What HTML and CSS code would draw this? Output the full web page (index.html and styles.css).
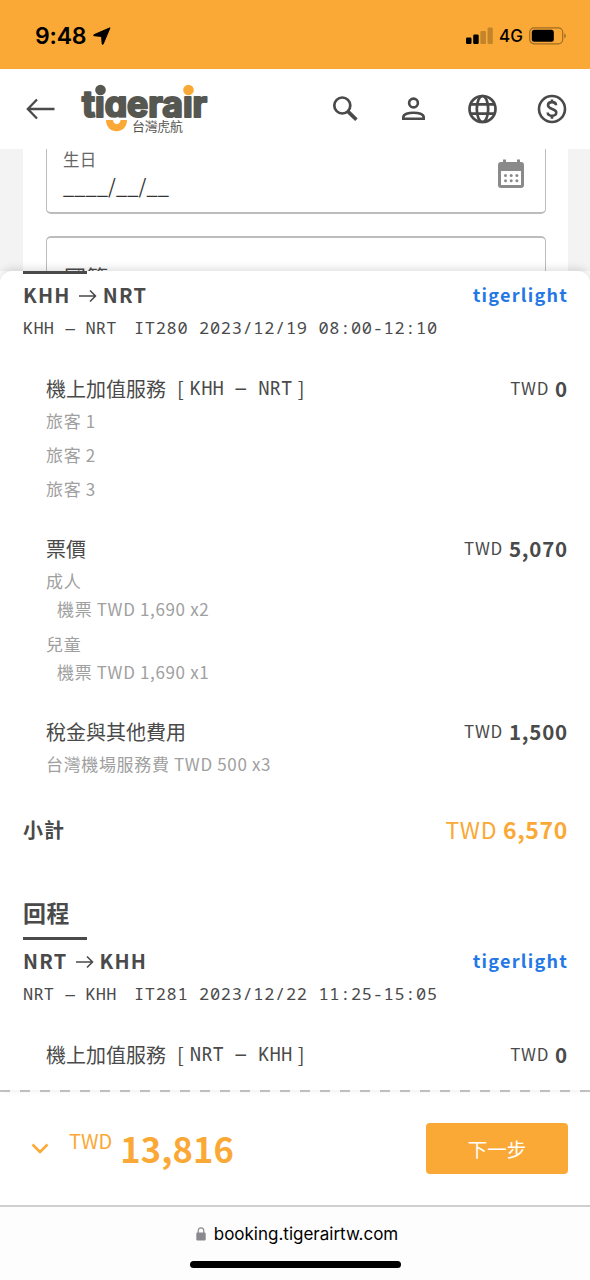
FILE: index.html
```html
<!DOCTYPE html>
<html lang="zh-Hant">
<head>
<meta charset="utf-8">
<title>tigerair 台灣虎航</title>
<link rel="stylesheet" href="styles.css">
</head>
<body>
<div class="phone">
  <div class="status">
    <span class="time">9:48</span>
    <svg class="loc" width="18" height="18" viewBox="0 0 18 18"><path d="M17 .8 10.200 17q-.6 1-1 0L8.600 9.400 1 8.700q-1-.4 0-1z" fill="#000" stroke="#000" stroke-linejoin="round"/></svg>
    <svg class="signal" width="28" height="18" viewBox="0 0 28 18"><rect x="0" y="10.500" width="5.500" height="6.500" rx="1.200"/><rect x="7.200" y="7.500" width="5.500" height="9.500" rx="1.200"/><g opacity=".22"><rect x="14.400" y="4" width="5.500" height="13" rx="1.200"/><rect x="21.600" y="0.500" width="5.200" height="16.500" rx="1.200"/></g></svg>
    <span class="net">4G</span>
    <svg class="battery" width="39" height="18" viewBox="0 0 39 18"><rect x=".7" y=".8" width="33" height="16" rx="4.500" fill="none" stroke="#a06c22" stroke-width="1.200"/><rect x="2.800" y="2.800" width="22" height="12" rx="2.500"/><path d="M35.500 6.200q2.300 2.600 0 5.200z" fill="#7c5319"/></svg>
  </div>

  <header class="header">
    <svg class="back" width="29" height="22" viewBox="0 0 29 22"><path d="M11 1.500 1.800 11l9.200 9.500M2 11h26.500" fill="none" stroke="#4a4a4a" stroke-width="2.300"/></svg>
    <svg class="logo" width="130" height="52" viewBox="0 0 130 52">
      <text class="logo-word" x="1" y="33.500" textLength="125" lengthAdjust="spacingAndGlyphs">tıgeraır</text>
      <rect x="23" y="34.700" width="25" height="17" fill="#fff"/>
      <circle cx="19.500" cy="7" r="5.300" fill="#575752"/>
      <circle cx="107.500" cy="7" r="5.300" fill="#faa936"/>
      <path d="M25 37h7c0 5.500 7.500 5.500 7.500 0H46c0 15-21 15-21 0z" fill="#faa936"/>
      <text class="logo-sub" x="51" y="47.500" textLength="51">台灣虎航</text>
    </svg>
    <nav class="tools">
      <svg width="28" height="28" viewBox="0 0 28 28"><circle cx="11.300" cy="10.500" r="8" fill="none" stroke="#4a4a4a" stroke-width="2.700"/><path d="m16.600 16.100 8.800 8.600" stroke="#4a4a4a" stroke-width="3.700"/></svg>
      <svg width="28" height="28" viewBox="0 0 28 28"><circle cx="14.500" cy="8" r="4.400" fill="none" stroke="#4a4a4a" stroke-width="2.600"/><path d="M4.300 23.800v-1.600c0-6 20.400-6 20.400 0v1.600z" fill="none" stroke="#4a4a4a" stroke-width="2.600"/></svg>
      <svg width="30" height="30" viewBox="0 0 30 30"><g fill="none" stroke="#4a4a4a" stroke-width="2.700"><circle cx="15.500" cy="15" r="13"/><ellipse cx="15.500" cy="15" rx="5.700" ry="13"/><path d="M3.800 10.400h23.400M3.800 19.600h23.400"/></g></svg>
      <svg width="30" height="30" viewBox="0 0 30 30"><g fill="none" stroke="#4a4a4a" stroke-width="2.600"><circle cx="15" cy="15" r="13"/><path d="M19 11.300c0-4.200-8-4.200-8 0 0 4.400 8.300 2.900 8.300 7.200 0 4.500-8.600 4.500-8.600 0M15 5.500v3M15 21.800v3"/></g></svg>
    </nav>
  </header>

  <main class="form">
    <div class="card">
      <div class="field birthday">
        <div>
          <div class="label">生日</div>
          <div class="mask">____/__/__</div>
        </div>
        <svg width="27" height="30" viewBox="0 0 27 30"><path fill="#8a8a8a" fill-rule="evenodd" d="M5 .5h3V3h11V.5h3V3h1q3 0 3 3v20q0 3-3 3H3q-3 0-3-3V6q0-3 3-3h2zM3 12v14h20V12z"/><g fill="#8a8a8a"><circle cx="7.500" cy="16.500" r="1.500"/><circle cx="13.200" cy="16.500" r="1.500"/><circle cx="18.900" cy="16.500" r="1.500"/><circle cx="7.500" cy="21.800" r="1.500"/><circle cx="13.200" cy="21.800" r="1.500"/><circle cx="18.900" cy="21.800" r="1.500"/></g></svg>
      </div>
      <div class="field nation"><span>國籍</span></div>
    </div>
  </main>

  <section class="sheet">
    <div class="rule"></div>
    <div class="route"><span class="r1">KHH</span><svg class="arrow" width="18" height="14" viewBox="0 0 18 14"><path d="M0 7h16.500M11 1.500 16.500 7 11 12.500" fill="none" stroke="#4a4a4a" stroke-width="1.600"/></svg><span class="r1">NRT</span><span class="fare">tigerlight</span></div>
    <div class="flight"><span class="leg">KHH <span class="dash">–</span> NRT</span><span>IT280 2023/12/19 08:00-12:10</span></div>
    <div class="item first">
      <div class="title"><span>機上加值服務</span><span class="br">[</span><span class="pair">KHH <span class="dash">–</span> NRT</span><span class="br2">]</span><span class="price"><small>TWD</small><b>0</b></span></div>
      <div class="sub">旅客 1</div>
      <div class="sub">旅客 2</div>
      <div class="sub">旅客 3</div>
    </div>
    <div class="item">
      <div class="title"><span>票價</span><span class="price"><small>TWD</small><b>5,070</b></span></div>
      <div class="sub">成人</div>
      <div class="ticket">機票 TWD 1,690 x2</div>
      <div class="sub">兒童</div>
      <div class="ticket">機票 TWD 1,690 x1</div>
    </div>
    <div class="item tax">
      <div class="title"><span>稅金與其他費用</span><span class="price"><small>TWD</small><b>1,500</b></span></div>
      <div class="sub">台灣機場服務費 TWD 500 x3</div>
    </div>
    <div class="subtotal"><b>小計</b><span class="sum">TWD <b>6,570</b></span></div>
    <h2 class="heading">回程</h2>
    <div class="rule"></div>
    <div class="route"><span class="r1">NRT</span><svg class="arrow" width="18" height="14" viewBox="0 0 18 14"><path d="M0 7h16.500M11 1.500 16.500 7 11 12.500" fill="none" stroke="#4a4a4a" stroke-width="1.600"/></svg><span class="r1">KHH</span><span class="fare">tigerlight</span></div>
    <div class="flight"><span class="leg">NRT <span class="dash">–</span> KHH</span><span>IT281 2023/12/22 11:25-15:05</span></div>
    <div class="item first">
      <div class="title"><span>機上加值服務</span><span class="br">[</span><span class="pair">NRT <span class="dash">–</span> KHH</span><span class="br2">]</span><span class="price"><small>TWD</small><b>0</b></span></div>
    </div>
  </section>

  <div class="total">
    <svg class="chev" width="18" height="12" viewBox="0 0 18 12"><path d="m1.500 2.500 7.500 7.500L16.500 2.500" fill="none" stroke="#faa936" stroke-width="2.600"/></svg>
    <span class="cur">TWD</span><b class="amount">13,816</b>
    <button class="next">下一步</button>
  </div>

  <footer class="browser">
    <div class="url"><svg width="10" height="14" viewBox="0 0 10 14"><rect x=".3" y="5.500" width="9.400" height="8" rx="1.200" fill="#8a8a8e"/><path d="M2.200 6V3.800q0-3 2.800-3t2.800 3V6" fill="none" stroke="#8a8a8e" stroke-width="1.200"/></svg><span>booking.tigerairtw.com</span></div>
    <div class="home"></div>
  </footer>
</div>
</body>
</html>
```
FILE: styles.css
```css
* { box-sizing: border-box; }
body { margin: 0; background: #fff; color: #4a4a4a; font-family: "Noto Sans CJK TC", sans-serif; }
svg { display: block; flex: none; }
.phone { width: 590px; height: 1280px; overflow: hidden; display: flex; flex-direction: column; }
.phone > * { flex: none; }

.status { height: 69px; padding: 2px 22px 0 35px; background: #faa936; color: #000; display: flex; align-items: center; font-family: Inter, sans-serif; }
.time { width: 51px; font-size: 23px; font-weight: 600; letter-spacing: -.2px; }
.loc { margin-left: 7px; }
.signal { margin-left: auto; }
.net { width: 24px; margin: 1px 6px 0 5px; font-size: 17px; font-weight: 500; white-space: nowrap; }

.header { height: 80px; padding: 0 23px 0 26px; display: flex; align-items: center; background: #fff; }
.logo { margin: 0 0 0 26px; overflow: visible; }
.logo-word { font-family: Inter, sans-serif; font-weight: 700; font-size: 35.500px; fill: #575752; stroke: #575752; stroke-width: 2.200px; stroke-linejoin: round; }
.logo-sub { font-size: 13px; fill: #575752; }
.tools { flex: 1; margin-left: 120px; display: flex; justify-content: space-between; align-items: center; }

.form { height: 122px; padding: 0 22px 0 23px; background: #f3f3f3; overflow: hidden; }
.card { height: 122px; padding: 0 22px 0 23px; background: #fff; }
.field { border: 1.500px solid #bcbcbc; border-radius: 5px; }
.birthday { height: 65px; padding: 0 20px 0 16px; border-top: 0; border-bottom-width: 2px; border-radius: 0 0 5px 5px; display: flex; justify-content: space-between; }
.birthday svg { margin-top: 10px; }
.label { height: 22px; font-size: 16.500px; line-height: 21px; letter-spacing: .3px; color: #666; }
.mask { font-size: 20px; line-height: 30px; color: #333; letter-spacing: .1px; }
.nation { height: 65px; margin-top: 22px; padding: 22px 17px; border-top-width: 2px; font-size: 22px; line-height: 32px; }

.sheet { height: 819px; padding: 0 23px; background: #fff; overflow: hidden; border-radius: 12px 12px 0 0; box-shadow: 0 -2px 8px rgba(0,0,0,.14); position: relative; }
.rule { width: 64px; height: 3px; background: #4a4a4a; }
.sheet > * { white-space: nowrap; }
.route { height: 41px; display: flex; align-items: center; font-size: 20px; font-weight: 700; line-height: 41px; }
.r1 { letter-spacing: 1.250px; }
.arrow { margin: 2px 6px 0 8px; }
.fare { margin-left: auto; margin-right: -1px; color: #2478e5; font-size: 18px; line-height: 43px; letter-spacing: 1.250px; }
.flight { height: 26px; display: flex; font: 17px/26px "Noto Sans Mono", "Noto Sans Mono CJK TC", "DejaVu Sans Mono", monospace; letter-spacing: .65px; }
.leg { width: 111px; letter-spacing: .2px; }
.dash { display: inline-block; transform: scaleX(1.4); }
.item { padding-left: 23px; margin-top: 28px; }
.item.first { margin-top: 32px; }
.item.tax { margin-top: 32px; }
.title { height: 30px; display: flex; font-size: 20px; line-height: 32px; }
.br { margin-left: 11px; }
.br2 { margin-left: 4px; }
.pair { width: 104px; margin-left: 6px; white-space: nowrap; font-family: "Noto Sans Mono", "Noto Sans Mono CJK TC", "DejaVu Sans Mono", monospace; font-size: 19px; line-height: 31px; }
.price { margin-left: auto; display: flex; gap: 6px; }
.price small { font-size: 17px; line-height: 30px; letter-spacing: .7px; }
.price b { font-size: 20.500px; line-height: 31px; letter-spacing: .8px; margin-right: -1px; }
.sub { height: 34px; font-size: 17px; line-height: 35px; color: #a0a0a0; letter-spacing: .65px; }
.ticket { height: 24px; margin: 0 0 5px 11px; font-size: 17px; line-height: 24px; color: #a0a0a0; letter-spacing: .65px; }
.subtotal { height: 30px; margin-top: 34px; display: flex; justify-content: space-between; font-size: 20px; line-height: 31px; letter-spacing: 1px; }
.sum { color: #faa936; font-size: 23px; letter-spacing: .65px; margin-right: -1px; line-height: 30px; }
.heading { height: 36px; margin: 50px 0 7px; font-size: 23px; line-height: 36px; letter-spacing: .5px; }

.total { height: 115px; padding: 1px 22px 0 31px; display: flex; align-items: center; background: repeating-linear-gradient(90deg, #c6c6c6 0 10px, transparent 10px 20px) 0 0 / 100% 2px no-repeat #fff; color: #faa936; }
.cur { margin: -16px 8px 0 20px; font-size: 20px; }
.amount { font-size: 34.500px; letter-spacing: .1px; }
.next { width: 142px; height: 51px; margin: 1px 0 0 auto; border: 0; border-radius: 4px; background: #faa936; color: #fff; font: 19.500px "Noto Sans CJK TC", sans-serif; }

.browser { height: 75px; border-top: 2px solid #cfcfcf; background: #fdfdfd; display: flex; flex-direction: column; align-items: center; }
.url { height: 54px; margin-left: 4px; display: flex; align-items: center; gap: 8px; color: #000; font: 17px Inter, sans-serif; }
.home { width: 211px; height: 7px; border-radius: 4px; background: #000; }
```
